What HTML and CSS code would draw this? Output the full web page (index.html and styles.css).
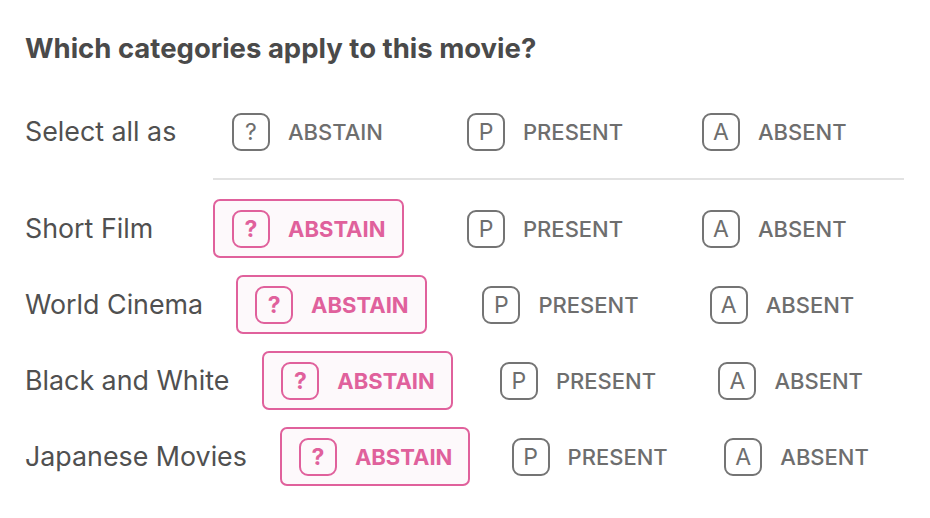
FILE: index.html
```html
<!DOCTYPE html>
<html lang="en">
<head>
    <meta charset="UTF-8">
    <meta name="viewport" content="width=device-width, initial-scale=1.0">
    <title>Movie categories</title>
    <link rel="stylesheet" href="styles.css">
</head>
<body>

    <div class="panel">
        <h1>Which categories apply to this movie?</h1>

        <!-- Fila para marcar todas las categorias de una vez -->
        <div class="row select-all">
            <div class="row-label">Select all as</div>
            <div class="options">
                <button class="option"><span class="icon">?</span>ABSTAIN</button>
                <button class="option"><span class="icon">P</span>PRESENT</button>
                <button class="option"><span class="icon">A</span>ABSENT</button>
            </div>
        </div>

        <div class="row">
            <div class="row-label">Short Film</div>
            <div class="options">
                <button class="option selected"><span class="icon">?</span>ABSTAIN</button>
                <button class="option"><span class="icon">P</span>PRESENT</button>
                <button class="option"><span class="icon">A</span>ABSENT</button>
            </div>
        </div>

        <div class="row">
            <div class="row-label">World Cinema</div>
            <div class="options">
                <button class="option selected"><span class="icon">?</span>ABSTAIN</button>
                <button class="option"><span class="icon">P</span>PRESENT</button>
                <button class="option"><span class="icon">A</span>ABSENT</button>
            </div>
        </div>

        <div class="row">
            <div class="row-label">Black and White</div>
            <div class="options">
                <button class="option selected"><span class="icon">?</span>ABSTAIN</button>
                <button class="option"><span class="icon">P</span>PRESENT</button>
                <button class="option"><span class="icon">A</span>ABSENT</button>
            </div>
        </div>

        <div class="row">
            <div class="row-label">Japanese Movies</div>
            <div class="options">
                <button class="option selected"><span class="icon">?</span>ABSTAIN</button>
                <button class="option"><span class="icon">P</span>PRESENT</button>
                <button class="option"><span class="icon">A</span>ABSENT</button>
            </div>
        </div>
    </div>

</body>
</html>
```

FILE: styles.css
```css
body {
    font-family: 'Inter', 'Noto Sans', sans-serif;
    background-color: #fff;
    margin: 0;
    padding: 0;
}

.panel {
    padding: 32px 26px 0 25px;
}

h1 {
    font-size: 27.5px;
    font-weight: 700;
    line-height: 32px;
    color: #4a4a4a;
    margin: 0 0 38px;
}

.row {
    display: flex;
    align-items: flex-start;
    gap: 33px;
    margin-bottom: 17px;
}

.row-label {
    flex: none;
    min-width: 155px;
    font-size: 26.8px;
    line-height: 59px;
    color: #505050;
}

.options {
    flex: 1;
    display: grid;
    grid-template-columns: repeat(3, 1fr);
    gap: 14px;
}

.select-all {
    margin-bottom: 19px;
}

.select-all .options {
    padding-bottom: 17px;
    border-bottom: 2px solid #e2e2e2;
}

.option {
    justify-self: start;
    display: inline-flex;
    align-items: center;
    gap: 18px;
    height: 59px;
    padding: 0 16px 0 17px;
    border: 2px solid transparent;
    border-radius: 7px;
    background: none;
    font-family: inherit;
    font-size: 22px;
    font-weight: 500;
    color: #6e6e6e;
    cursor: pointer;
}

.icon {
    display: flex;
    align-items: center;
    justify-content: center;
    width: 34px;
    height: 34px;
    border: 2px solid #747474;
    border-radius: 9px;
    font-size: 23px;
    font-weight: 400;
}

.option.selected {
    border-color: #e0619c;
    background-color: #fdf9fb;
    color: #e0619c;
    font-weight: 700;
}

.option.selected .icon {
    border-color: #e0619c;
    font-weight: 700;
}
```
